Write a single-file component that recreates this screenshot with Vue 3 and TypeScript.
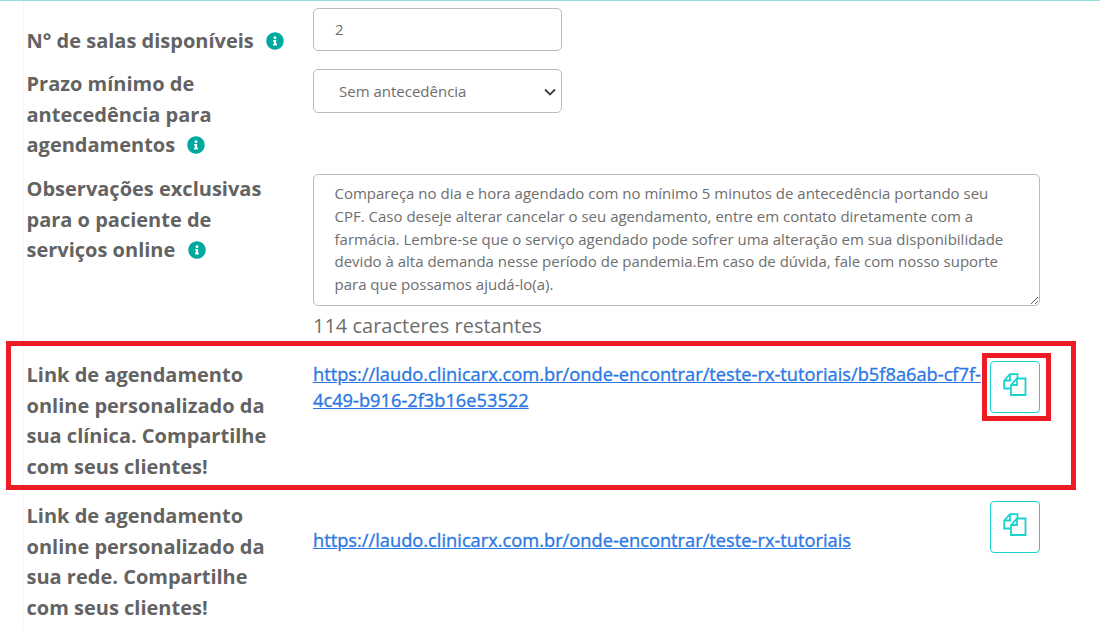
<script setup lang="ts">
const obs = 'Compareça no dia e hora agendado com no mínimo 5 minutos de antecedência portando seu CPF. Caso deseje alterar cancelar o seu agendamento, entre em contato diretamente com a farmácia. Lembre-se que o serviço agendado pode sofrer uma alteração em sua disponibilidade devido à alta demanda nesse período de pandemia.Em caso de dúvida, fale com nosso suporte para que possamos ajudá-lo(a).'
</script>

<template>
  <main class="page">
    <div class="form">
      <section class="row row-rooms">
        <label class="label">N° de salas disponíveis <svg class="info" viewBox="0 0 512 512"><path d="M256 8C119 8 8 119 8 256s111 248 248 248 248-111 248-248S393 8 256 8zm0 110c23 0 42 19 42 42s-19 42-42 42-42-19-42-42 19-42 42-42zm56 254c0 7-5 12-12 12h-88c-7 0-12-5-12-12v-24c0-7 5-12 12-12h12v-64h-12c-7 0-12-5-12-12v-24c0-7 5-12 12-12h64c7 0 12 5 12 12v100h12c7 0 12 5 12 12v24z"/></svg></label>
        <input class="field input" value="2" />
      </section>
      <section class="row row-term">
        <label class="label">Prazo mínimo de antecedência para agendamentos <svg class="info" viewBox="0 0 512 512"><path d="M256 8C119 8 8 119 8 256s111 248 248 248 248-111 248-248S393 8 256 8zm0 110c23 0 42 19 42 42s-19 42-42 42-42-19-42-42 19-42 42-42zm56 254c0 7-5 12-12 12h-88c-7 0-12-5-12-12v-24c0-7 5-12 12-12h12v-64h-12c-7 0-12-5-12-12v-24c0-7 5-12 12-12h64c7 0 12 5 12 12v100h12c7 0 12 5 12 12v24z"/></svg></label>
        <div class="select-wrap">
          <select class="field select"><option>Sem antecedência</option></select>
          <svg class="chevron" viewBox="0 0 12 8" fill="none" stroke="currentColor" stroke-width="1.800"><path d="M1 1.500L6 6.500L11 1.500"/></svg>
        </div>
      </section>
      <section class="row row-obs">
        <label class="label">Observações exclusivas para o paciente de serviços online <svg class="info" viewBox="0 0 512 512"><path d="M256 8C119 8 8 119 8 256s111 248 248 248 248-111 248-248S393 8 256 8zm0 110c23 0 42 19 42 42s-19 42-42 42-42-19-42-42 19-42 42-42zm56 254c0 7-5 12-12 12h-88c-7 0-12-5-12-12v-24c0-7 5-12 12-12h12v-64h-12c-7 0-12-5-12-12v-24c0-7 5-12 12-12h64c7 0 12 5 12 12v100h12c7 0 12 5 12 12v24z"/></svg></label>
        <div class="obs-col">
          <textarea class="field area" :value="obs"></textarea>
          <div class="remaining">114 caracteres restantes</div>
        </div>
      </section>
      <section class="row row-link row-link-a">
        <label class="label">Link de agendamento online personalizado da sua clínica. Compartilhe com seus clientes!</label>
        <a class="link" href="#">https://laudo.clinicarx.com.br/onde-encontrar/teste-rx-tutoriais/b5f8a6ab-cf7f-4c49-b916-2f3b16e53522</a>
        <button class="copy" type="button" aria-label="Copiar">
          <svg viewBox="0 0 24 24" fill="none" stroke="currentColor" stroke-width="1.8"><path d="M7 15.500H1.200V7.500L7 1.200H14.500V5.500"/><path d="M7 1.200V7.500H1.200"/><path d="M8 12L14 5.500H22.500V22H8Z"/><path d="M14 5.500V12H8"/></svg>
        </button>
      </section>
      <section class="row row-link row-link-b">
        <label class="label">Link de agendamento online personalizado da sua rede. Compartilhe com seus clientes!</label>
        <a class="link" href="#">https://laudo.clinicarx.com.br/onde-encontrar/teste-rx-tutoriais</a>
        <button class="copy" type="button" aria-label="Copiar">
          <svg viewBox="0 0 24 24" fill="none" stroke="currentColor" stroke-width="1.8"><path d="M7 15.500H1.200V7.500L7 1.200H14.500V5.500"/><path d="M7 1.200V7.500H1.200"/><path d="M8 12L14 5.500H22.500V22H8Z"/><path d="M14 5.500V12H8"/></svg>
        </button>
      </section>
    </div>
    <div class="mark mark-row"></div>
    <div class="mark mark-btn"></div>
  </main>
</template>

<style>
html, body { margin: 0; background: #fff; overflow: hidden; }
</style>

<style scoped>
.page { position: relative; width: 1100px; height: 629px; overflow: hidden; box-sizing: border-box; border-top: 1px solid #8fe3dc; font-family: "Open Sans", sans-serif; color: #636363; }
.form { margin: 0 60px 0 23px; padding: 7px 0 0 2.500px; height: 628px; box-sizing: border-box; display: flex; flex-direction: column; border-left: 1px solid #f7f7f7; }
.row { display: grid; grid-template-columns: 286.500px 1fr; align-items: start; }
.label { font-size: 20px; line-height: 30.500px; font-weight: 700; color: #636363; width: 256px; }
.info { width: 18px; height: 18px; fill: #00a9a0; margin-left: 7px; vertical-align: -2px; }
.field { box-sizing: border-box; border: 1px solid #bdbdbd; border-radius: 5px; background: #fff; font-family: "Open Sans", sans-serif; font-size: 15px; color: #6e6e6e; outline: none; }
.input { width: 249px; height: 43px; padding: 0 21px 2px; margin: 0; }
.row-rooms { height: 61px; }
.row-rooms .label { padding-top: 18px; white-space: nowrap; }
.row-term { height: 105px; }
.select-wrap { position: relative; width: 249px; height: 44px; color: #3f3f3f; }
.select { display: block; appearance: none; width: 249px; height: 44px; padding: 0 30px 0 25px; margin: 0; }
.chevron { position: absolute; right: 6px; top: 19px; width: 12px; height: 8px; pointer-events: none; }
.row-obs { height: 186px; }
.area { display: block; width: 727px; height: 132px; padding: 7px 20.500px; margin: 0; line-height: 22.750px; resize: both; overflow: hidden; }
.remaining { font-size: 20px; line-height: 30px; color: #6e6e6e; margin-top: 5px; }
.row-link { grid-template-columns: 286.500px 671px 56px; position: relative; }
.row-link-a { height: 141px; }
.link { font-size: 18.250px; line-height: 26px; font-weight: 400; -webkit-text-stroke: 0.350px #2b78e4; color: #2b78e4; text-decoration: underline; padding-top: 1px; }
.row-link-b .link { padding-top: 26px; }
.copy { box-sizing: border-box; width: 50px; height: 52px; margin: 1px 0 0 6px; padding: 0 0 5px; background: #fff; border: 1px solid #19d3cf; border-radius: 4px; color: #19d3cf; display: flex; align-items: center; justify-content: center; }
.row-link-b .copy { margin-top: 0; }
.copy svg { width: 24px; height: 24px; }
.mark { position: absolute; box-sizing: border-box; border: 5px solid #ed1c24; }
.mark-row { left: 6px; top: 340px; width: 1070px; height: 149px; }
.mark-btn { left: 982px; top: 352px; width: 69px; height: 68px; }
</style>
